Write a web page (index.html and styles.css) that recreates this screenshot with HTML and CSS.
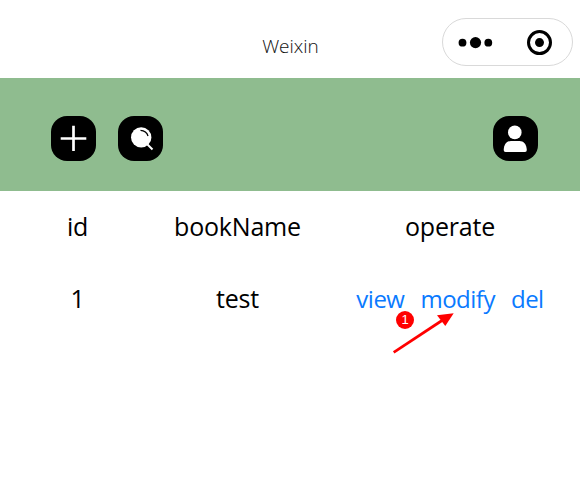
FILE: index.html
```html
<!DOCTYPE html>
<html lang="en">
<head>
<meta charset="utf-8">
<title>Weixin</title>
<link rel="stylesheet" href="styles.css">
</head>
<body>
<header class="nav">
  <span class="title">Weixin</span>
  <div class="capsule">
    <svg width="131" height="48" viewBox="0 0 131 48"><circle cx="20.500" cy="24.700" r="3.900"/><circle cx="33.500" cy="24.600" r="5.600"/><circle cx="46.300" cy="24.700" r="3.900"/><circle cx="97.500" cy="24.600" r="11" fill="none" stroke="#000" stroke-width="3"/><circle cx="97.500" cy="24.600" r="4.500"/></svg>
  </div>
</header>
<div class="toolbar">
  <svg class="icon" viewBox="0 0 45 45"><path d="M9.700 22.500H35.300M22.500 9.700V35" stroke="#fff" stroke-width="2.700"/></svg>
  <svg class="icon" viewBox="0 0 45 45"><circle cx="23.200" cy="21.400" r="10.200" fill="#fff"/><path d="M29 28L34.500 33.500" stroke="#fff" stroke-width="2"/><path d="M22.500 14.300Q28.500 14.500 30 20" fill="none" stroke="#000" stroke-width="1.300"/></svg>
  <svg class="icon user" viewBox="0 0 45 45"><circle cx="21.800" cy="16.400" r="6.800" fill="#fff"/><path d="M10.700 34C11 28 14 25 18 25H26.500C30.500 25 33.500 28 33.800 34Q33.800 36 32 36H12.500Q10.700 36 10.700 34Z" fill="#fff"/></svg>
</div>
<main class="table">
  <div class="row"><span>id</span><span>bookName</span><span>operate</span></div>
  <div class="row"><span>1</span><span>test</span><span class="actions"><a>view</a><a>modify</a><a>del</a></span></div>
</main>
<div class="badge">1</div>
<svg class="arrow" width="64" height="44" viewBox="0 0 64 44"><path d="M3.700 42.300L52 10.500" stroke="#f00" stroke-width="2.700"/><path d="M63.700 3.200L55.300 16L47 5.300Z" fill="#f00"/></svg>
</body>
</html>
```
FILE: styles.css
```css
* { box-sizing: border-box; }
body { margin: 0; height: 482px; overflow: hidden; background: #fff; color: #000; font-family: "Open Sans", "Noto Sans", sans-serif; }
.nav { height: 78px; display: grid; grid-template-columns: 1fr 131px; padding: 18px 7px 0 0; }
.title { justify-self: center; padding-left: 139px; font-size: 19px; font-weight: 350; line-height: 56px; color: #111; }
.capsule { height: 48px; border: 1px solid #d9d9d9; border-radius: 24px; }
.capsule svg { display: block; margin: -1px; }
.toolbar { height: 113px; background: #8fbc8f; display: flex; align-items: center; padding: 8px 42px 0 51px; gap: 22px; }
.icon { width: 45px; height: 45px; border-radius: 16px; background: #000; }
.user { margin-left: auto; }
.row { display: grid; grid-template-columns: 155px 165px 260px; height: 72px; line-height: 70px; text-align: center; font-size: 25px; letter-spacing: -0.2px; }
.actions { display: flex; justify-content: center; gap: 16px; color: #0a7aff; font-size: 24px; line-height: 72px; letter-spacing: -0.5px; }
.badge { position: absolute; left: 396px; top: 311px; width: 18px; height: 18px; border-radius: 50%; background: #f00; color: #fff; font: 13px/18px "Liberation Sans", sans-serif; text-align: center; }
.arrow { position: absolute; left: 390px; top: 310px; }
```
